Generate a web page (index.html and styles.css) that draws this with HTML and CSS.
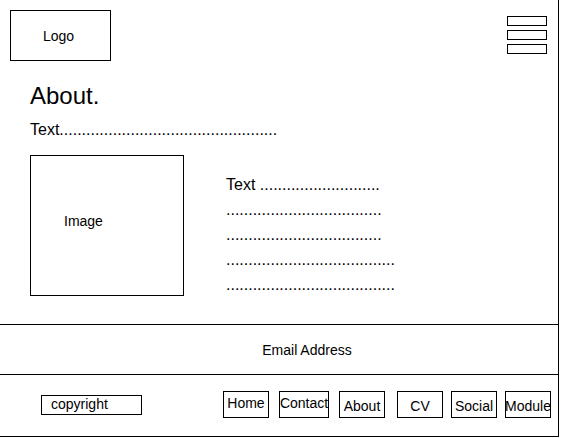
FILE: index.html
```html
<!DOCTYPE html>
<html lang="en">
<head>
<meta charset="utf-8">
<title>About</title>
<link rel="stylesheet" href="styles.css">
</head>
<body>
<div class="frame">
  <header class="header">
    <div class="logo">Logo</div>
    <div class="burger">
      <span class="burger-bar"></span>
      <span class="burger-bar"></span>
      <span class="burger-bar"></span>
    </div>
  </header>
  <main class="main">
    <h1 class="title">About.</h1>
    <p class="lead">Text.................................................</p>
    <div class="row">
      <div class="image">Image</div>
      <div class="copy">
        <p class="copy-line">Text ...........................</p>
        <p class="copy-line">...................................</p>
        <p class="copy-line">...................................</p>
        <p class="copy-line">......................................</p>
        <p class="copy-line">......................................</p>
      </div>
    </div>
  </main>
  <section class="email">Email Address</section>
  <footer class="footer">
    <div class="copyright">copyright</div>
    <nav class="nav">
      <span class="nav-item nav-item--high">Home</span>
      <span class="nav-item nav-item--high nav-item--wide nav-item--gap10">Contact</span>
      <span class="nav-item nav-item--gap10">About</span>
      <span class="nav-item nav-item--gap12">CV</span>
      <span class="nav-item">Social</span>
      <span class="nav-item">Module</span>
    </nav>
  </footer>
</div>
</body>
</html>
```

FILE: styles.css
```css
* { box-sizing: border-box; }

html, body {
  margin: 0;
  padding: 0;
  background: #fff;
}

body {
  font-family: "Liberation Sans", Arial, sans-serif;
  color: #000;
}

.frame {
  width: 559px;
  height: 437px;
  border-right: 1px solid #000;
  border-bottom: 1px solid #000;
  display: flex;
  flex-direction: column;
}

.header {
  display: flex;
  justify-content: space-between;
  align-items: flex-start;
  padding: 10px 11px 0 10px;
}

.logo {
  width: 101px;
  height: 51px;
  border: 1px solid #000;
  display: flex;
  align-items: center;
  padding-left: 32px;
  font-size: 14px;
  line-height: 16px;
}

.burger {
  display: flex;
  flex-direction: column;
  gap: 4px;
  margin-top: 6px;
}

.burger-bar {
  display: block;
  width: 40px;
  height: 10px;
  border: 1px solid #000;
}

.main {
  padding-left: 30px;
}

.title {
  margin: 21px 0 0;
  font-size: 24px;
  line-height: 28px;
  font-weight: normal;
}

.lead {
  margin: 10px 0 0;
  font-size: 16px;
  line-height: 20px;
}

.row {
  display: flex;
  gap: 42px;
  margin-top: 15px;
}

.image {
  width: 154px;
  height: 141px;
  border: 1px solid #000;
  padding: 57px 0 0 33px;
  font-size: 14px;
  line-height: 16px;
}

.copy {
  padding-top: 17px;
}

.copy-line {
  margin: 0;
  font-size: 16px;
  line-height: 25px;
}

.email {
  margin-top: 27px;
  height: 51px;
  border-top: 1px solid #000;
  border-bottom: 1px solid #000;
  display: flex;
  align-items: center;
  justify-content: center;
  padding-left: 56px;
  font-size: 14px;
  line-height: 16px;
}

.footer {
  flex: 1;
  display: flex;
  align-items: flex-start;
  padding: 16px 0 0 41px;
}

.copyright {
  width: 101px;
  height: 20px;
  margin-top: 4px;
  border: 1px solid #000;
  padding-left: 9px;
  font-size: 14px;
  line-height: 17px;
}

.nav {
  display: flex;
  gap: 8px;
  margin-left: 81px;
}

.nav-item {
  width: 46px;
  height: 27px;
  border: 1px solid #000;
  display: flex;
  justify-content: center;
  padding-top: 6px;
  font-size: 14px;
  line-height: 16px;
  white-space: nowrap;
}

.nav-item--high { padding-top: 3px; }
.nav-item--wide { width: 50px; }
.nav-item--gap10 { margin-left: 2px; }
.nav-item--gap12 { margin-left: 4px; }
```
